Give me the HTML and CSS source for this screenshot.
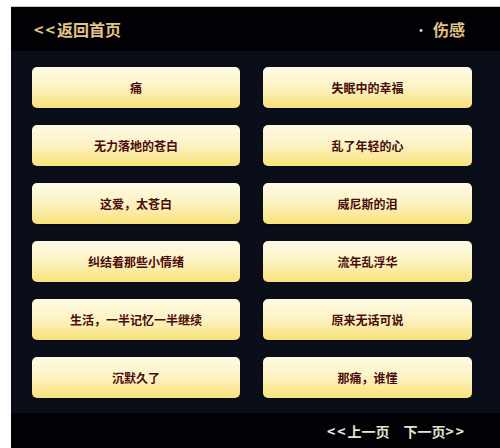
FILE: index.html
```html
<!DOCTYPE html>
<html lang="zh">
<head>
<meta charset="utf-8">
<title>伤感</title>
<link rel="stylesheet" href="styles.css">
</head>
<body>
<div class="panel">
  <header class="top">
    <a class="back"><span class="arr">&lt;&lt;</span>返回首页</a>
    <span class="cat"><span class="dot">·</span>伤感</span>
  </header>
  <main class="list">
    <a class="item">痛</a>
    <a class="item">失眠中的幸福</a>
    <a class="item">无力落地的苍白</a>
    <a class="item">乱了年轻的心</a>
    <a class="item">这爱，太苍白</a>
    <a class="item">威尼斯的泪</a>
    <a class="item">纠结着那些小情绪</a>
    <a class="item">流年乱浮华</a>
    <a class="item">生活，一半记忆一半继续</a>
    <a class="item">原来无话可说</a>
    <a class="item">沉默久了</a>
    <a class="item">那痛，谁懂</a>
  </main>
  <footer class="bottom">
    <a class="pg"><span class="arr">&lt;&lt;</span>上一页</a>
    <a class="pg">下一页<span class="arr">&gt;&gt;</span></a>
  </footer>
</div>
</body>
</html>
```
FILE: styles.css
```css
html, body {
  margin: 0;
  padding: 0;
  background: #ffffff;
  font-family: "Noto Sans CJK SC", "Liberation Sans", sans-serif;
}
body {
  padding: 6px 0 0 11px;
  width: 489px;
  height: 442px;
  overflow: hidden;
}
.panel {
  width: 489px;
  height: 442px;
  display: flex;
  flex-direction: column;
  background: #0a0e19;
  border-top: 1px solid #c8c8c8;
  box-sizing: border-box;
}
.top {
  height: 44px;
  flex: none;
  background: #020206;
  display: flex;
  align-items: center;
  justify-content: space-between;
  padding: 0 35px 0 23px;
  color: #e2c489;
  font-weight: bold;
  font-size: 16px;
}
.arr { letter-spacing: 2px; }
.cat { display: flex; align-items: center; }
.dot { font-weight: normal; font-size: 14px; margin-right: 5px; color: #d8d0c0; }
.list {
  flex: 1;
  display: grid;
  grid-template-columns: 208px 209px;
  grid-auto-rows: 41px;
  column-gap: 23px;
  row-gap: 17px;
  padding: 16px 28px 0 21px;
  align-content: start;
}
.item {
  display: flex;
  align-items: center;
  justify-content: center;
  border-radius: 5px;
  background: linear-gradient(to bottom, #fefbe6 0%, #fcf2c2 50%, #f8e279 100%);
  color: #4a0d0d;
  font-size: 12px;
  font-weight: bold;
  box-shadow: 0 1px 1px rgba(0,0,0,0.4);
}
.bottom {
  height: 35px;
  flex: none;
  background: #020206;
  display: flex;
  align-items: center;
  justify-content: flex-end;
  gap: 14px;
  padding-right: 34px;
  color: #e6e1d2;
  font-size: 14px;
  font-weight: bold;
}
```
